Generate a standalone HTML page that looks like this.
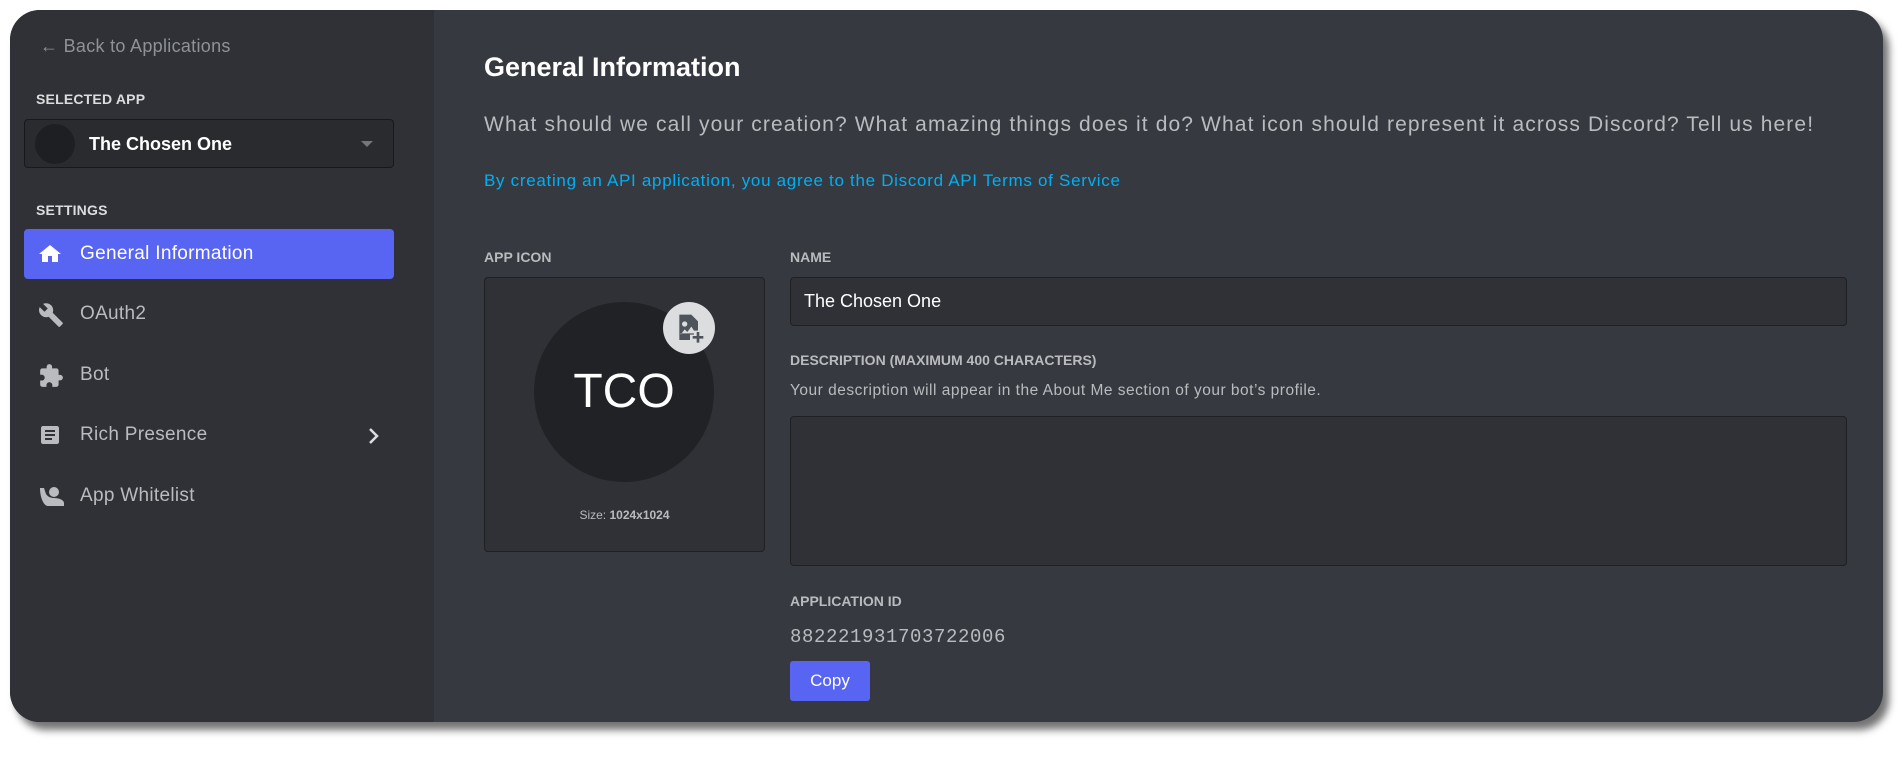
<!DOCTYPE html>
<html><head><meta charset="utf-8"><style>
*{box-sizing:border-box;margin:0;padding:0}
body{width:1902px;height:771px;background:#fff;font-family:"Liberation Sans",sans-serif;position:relative;overflow:hidden}
.win{position:absolute;left:10px;top:10px;width:1873px;height:712px;border-radius:30px;background:#36393f;overflow:hidden;box-shadow:6px 8px 8px rgba(0,0,0,.55)}
.side{position:absolute;left:0;top:0;width:424px;height:100%;background:#2f3136}
.a{position:absolute;white-space:nowrap}
.lbl{font-size:14px;font-weight:bold;color:#dcddde;letter-spacing:.2px}
.nav{position:absolute;left:14px;width:370px;height:50px;border-radius:4px;font-size:19px;color:#b9bbbe;letter-spacing:.3px}
.nav .t{position:absolute;left:56px;top:14px}
.nav svg{position:absolute;left:14px;top:13px}
.h{font-size:14px;font-weight:bold;color:#b9bbbe}
.box{position:absolute;background:#303136;border:1px solid #1f2023;border-radius:4px}
</style></head><body>
<div class="win">
 <div class="side">
  <div class="a" style="left:30px;top:26px;font-size:18px;color:#8e9297;letter-spacing:.3px">← Back to Applications</div>
  <div class="a lbl" style="left:26px;top:81px">SELECTED APP</div>
  <div class="box" style="left:14px;top:109px;width:370px;height:49px;background:#292b2f;border-color:#18191c">
   <div class="a" style="left:10px;top:4px;width:40px;height:40px;border-radius:50%;background:#1e1f22"></div>
   <div class="a" style="left:64px;top:14px;font-size:18px;color:#fff;font-weight:bold">The Chosen One</div>
   <div class="a" style="right:20px;top:21px;border:6px solid transparent;border-top-color:#72767d;border-bottom:0"></div>
  </div>
  <div class="a lbl" style="left:26px;top:192px">SETTINGS</div>
  <div class="nav" style="top:219px;background:#5865f2;color:#fff"><svg width="24" height="24" viewBox="0 0 24 24"><path fill="#fff" d="M12 3L1 12h3v8h6v-6h4v6h6v-8h3z"/></svg><span class="t">General Information</span></div>
  <div class="nav" style="top:279px"><svg width="26" height="26" viewBox="0 0 24 24"><path fill="#b9bbbe" d="M22.7 19l-9.1-9.1c.9-2.3.4-5-1.5-6.9-2-2-5-2.4-7.4-1.3L9 6 6 9 1.6 4.7C.4 7.1.9 10.1 2.9 12.1c1.9 1.9 4.6 2.4 6.9 1.5l9.1 9.1c.4.4 1 .4 1.4 0l2.3-2.3c.5-.4.5-1.1.1-1.4z"/></svg><span class="t">OAuth2</span></div>
  <div class="nav" style="top:340px"><svg width="26" height="26" viewBox="0 0 24 24"><path fill="#b9bbbe" d="M20.5 11H19V7c0-1.1-.9-2-2-2h-4V3.5a2.5 2.5 0 00-5 0V5H4c-1.1 0-2 .9-2 2v3.8h1.5c1.5 0 2.7 1.2 2.7 2.7S5 16.2 3.5 16.2H2V20c0 1.1.9 2 2 2h3.8v-1.5c0-1.5 1.2-2.7 2.7-2.7s2.7 1.2 2.7 2.7V22H17c1.1 0 2-.9 2-2v-4h1.5a2.5 2.5 0 000-5z"/></svg><span class="t">Bot</span></div>
  <div class="nav" style="top:400px"><svg width="24" height="24" viewBox="0 0 24 24"><path fill="#b9bbbe" d="M19 3H5c-1.1 0-2 .9-2 2v14c0 1.1.9 2 2 2h14c1.1 0 2-.9 2-2V5c0-1.1-.9-2-2-2zm-5 14H7v-2h7v2zm3-4H7v-2h10v2zm0-4H7V7h10v2z"/></svg><span class="t">Rich Presence</span><svg width="12" height="18" viewBox="0 0 12 18" style="left:343px;top:17px"><path d="M3 2l7 7-7 7" stroke="#dcddde" stroke-width="2.5" fill="none"/></svg></div>
  <div class="nav" style="top:461px"><svg width="28" height="24" viewBox="0 0 28 24"><circle cx="16" cy="8" r="5" fill="#b9bbbe"/><path fill="#b9bbbe" d="M2 4l4 0 2 6c2 3 5 4 8 4 5 0 10 2 10 5v3H10C6 22 2 14 2 4z"/></svg><span class="t">App Whitelist</span></div>
 </div>
 <div class="a" style="left:474px;top:42px;font-size:27px;font-weight:bold;color:#fff">General Information</div>
 <div class="a" style="left:474px;top:103px;font-size:21px;color:#b9bbbe;letter-spacing:1.12px">What should we call your creation? What amazing things does it do? What icon should represent it across Discord? Tell us here!</div>
 <div class="a" style="left:474px;top:161px;font-size:17px;color:#00aff4;letter-spacing:.7px">By creating an API application, you agree to the Discord API Terms of Service</div>
 <div class="a h" style="left:474px;top:239px">APP ICON</div>
 <div class="box" style="left:474px;top:267px;width:281px;height:275px;background:#2f3136">
  <div class="a" style="left:49px;top:24px;width:180px;height:180px;border-radius:50%;background:#202225;color:#fff;font-size:48px;text-align:center;line-height:180px">TCO</div>
  <div class="a" style="left:178px;top:24px;width:52px;height:52px;border-radius:50%;background:#dcddde"><svg width="32" height="32" viewBox="0 0 24 24" style="position:absolute;left:11px;top:10px"><path fill="#4f545c" d="M4 2h9l5 5v7h-3v3h-3v4H4z"/><circle cx="8" cy="9" r="2" fill="#dcddde"/><path fill="#dcddde" d="M5 17l3-4 2 2 3-4 2 3v2H5z"/><path fill="#4f545c" d="M17 15h2v3h3v2h-3v3h-2v-3h-3v-2h3z"/></svg></div>
  <div class="a" style="left:0;width:100%;top:230px;text-align:center;font-size:12px;color:#b9bbbe">Size: <b>1024x1024</b></div>
 </div>
 <div class="a h" style="left:780px;top:239px">NAME</div>
 <div class="box" style="left:780px;top:267px;width:1057px;height:49px"><div class="a" style="left:13px;top:13px;font-size:18px;color:#fff">The Chosen One</div></div>
 <div class="a h" style="left:780px;top:342px">DESCRIPTION (MAXIMUM 400 CHARACTERS)</div>
 <div class="a" style="left:780px;top:372px;font-size:15.5px;color:#b9bbbe;letter-spacing:.5px">Your description will appear in the About Me section of your bot’s profile.</div>
 <div class="box" style="left:780px;top:406px;width:1057px;height:150px"></div>
 <div class="a h" style="left:780px;top:583px">APPLICATION ID</div>
 <div class="a" style="left:780px;top:616px;font-family:'Liberation Mono',monospace;font-size:19px;color:#b9bbbe;letter-spacing:.6px">882221931703722006</div>
 <div class="a" style="left:780px;top:651px;width:80px;height:40px;background:#5865f2;border-radius:3px;color:#fff;font-size:17px;text-align:center;line-height:40px">Copy</div>
</div>
</body></html>
